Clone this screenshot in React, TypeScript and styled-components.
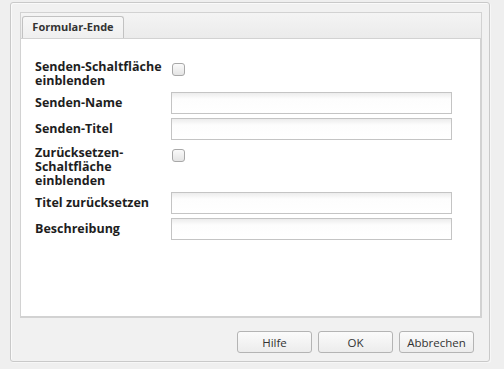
import { createGlobalStyle } from "styled-components";
import styled from "styled-components";

const GlobalStyle = createGlobalStyle`
  html, body {
    margin: 0;
    padding: 0;
    background: #efefef;
    font-family: "Open Sans", "Noto Sans", Arial, sans-serif;
  }
`;

const Page = styled.div`
  width: 504px;
  height: 369px;
  padding: 2px 0 0 10px;
  box-sizing: border-box;
`;

const Dialog = styled.div`
  width: 480px;
  height: 360px;
  box-sizing: border-box;
  border: 1px solid #c9c9c9;
  border-radius: 3px;
  background: #f1f1f1;
  box-shadow: inset 1px 1px 0 #fafafa, 1px 1px 0 #f7f7f7;
  padding: 9px 0 0 9px;
  display: flex;
  flex-direction: column;
`;

const Panel = styled.div`
  width: 462px;
  display: flex;
  flex-direction: column;
`;

const TabStrip = styled.div`
  height: 26px;
  box-sizing: border-box;
  border: 1px solid #d2d2d2;
  border-bottom: none;
  background: linear-gradient(#f4f4f4, #ebebeb);
  padding: 3px 0 0 1px;
  display: flex;
  align-items: flex-end;
`;

const Tab = styled.div`
  height: 23px;
  box-sizing: border-box;
  width: 102px;
  border: 1px solid #c2c2c2;
  border-bottom: none;
  border-radius: 3px 3px 0 0;
  background: linear-gradient(#f7f7f7, #efefef);
  color: #333;
  font-size: 11px;
  font-weight: 700;
  line-height: 20px;
  text-align: center;
  margin-bottom: -1px;
`;

const Body = styled.div`
  height: 280px;
  box-sizing: border-box;
  border: 1px solid #d2d2d2;
  border-right-width: 2px;
  border-bottom-width: 2px;
  background: #fff;
  padding: 19px 0 0 14px;
  display: flex;
  flex-direction: column;
  gap: 4px;
`;

const Row = styled.div`
  display: flex;
  align-items: flex-start;
`;

const Label = styled.div<{ $multi?: boolean }>`
  width: 136px;
  flex: none;
  color: #1e1e1e;
  font-size: 12.5px;
  font-weight: 700;
  line-height: ${(p) => (p.$multi ? "14px" : "22px")};
  padding-top: ${(p) => (p.$multi ? "2px" : "0")};
`;

const TextInput = styled.input`
  width: 281px;
  height: 22px;
  box-sizing: border-box;
  border: 1px solid #c4c4c4;
  background: linear-gradient(#ececec, #fdfdfd 6px, #fff);
  margin: 0;
  padding: 0 4px;
  outline: none;
`;

const Check = styled.input`
  appearance: none;
  width: 13px;
  height: 13px;
  margin: 5px 0 0 1px;
  box-sizing: border-box;
  border: 1px solid #a8a8a8;
  border-radius: 3px;
  background: linear-gradient(#fafafa, #e4e4e4);
`;

const Footer = styled.div`
  display: flex;
  justify-content: flex-end;
  gap: 6px;
  padding: 13px 15px 0 0;
`;

const Button = styled.button`
  width: 75px;
  height: 22px;
  box-sizing: border-box;
  border: 1px solid #b4b4b4;
  border-radius: 3px;
  background: linear-gradient(#fbfbfb, #ececec);
  color: #333;
  font-family: "Open Sans", "Noto Sans", Arial, sans-serif;
  font-size: 11.5px;
  padding: 0;
`;

const fields: { label: string[]; kind: "text" | "check" }[] = [
  { label: ["Senden-Schaltfläche", "einblenden"], kind: "check" },
  { label: ["Senden-Name"], kind: "text" },
  { label: ["Senden-Titel"], kind: "text" },
  { label: ["Zurücksetzen-", "Schaltfläche", "einblenden"], kind: "check" },
  { label: ["Titel zurücksetzen"], kind: "text" },
  { label: ["Beschreibung"], kind: "text" },
];

export default function App() {
  return (
    <Page>
      <GlobalStyle />
      <Dialog>
        <Panel>
          <TabStrip>
            <Tab>Formular-Ende</Tab>
          </TabStrip>
          <Body>
            {fields.map((f) => (
              <Row key={f.label.join(" ")}>
                <Label $multi={f.label.length > 1}>
                  {f.label.map((l) => (
                    <div key={l}>{l}</div>
                  ))}
                </Label>
                {f.kind === "text" ? <TextInput type="text" /> : <Check type="checkbox" />}
              </Row>
            ))}
          </Body>
        </Panel>
        <Footer>
          <Button>Hilfe</Button>
          <Button>OK</Button>
          <Button>Abbrechen</Button>
        </Footer>
      </Dialog>
    </Page>
  );
}
